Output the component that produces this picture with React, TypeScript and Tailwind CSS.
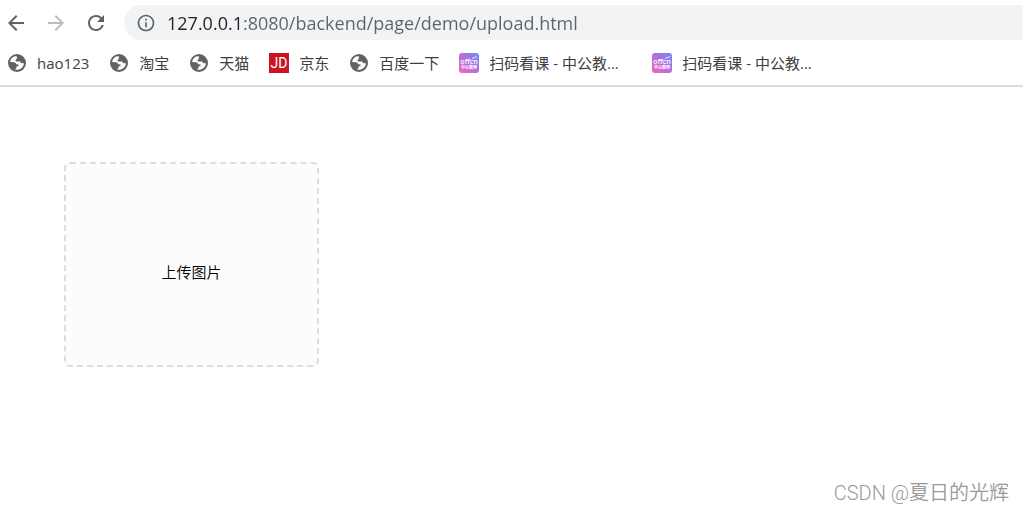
import { useRef, useState } from 'react';
import { MdArrowBack, MdArrowForward, MdInfoOutline, MdRefresh } from 'react-icons/md';

type IconKind = 'globe' | 'jd' | 'offcn';

const bookmarks: { id: number; title: string; icon: IconKind; long?: boolean }[] = [
  { id: 1, title: 'hao123', icon: 'globe' },
  { id: 2, title: '淘宝', icon: 'globe' },
  { id: 3, title: '天猫', icon: 'globe' },
  { id: 4, title: '京东', icon: 'jd' },
  { id: 5, title: '百度一下', icon: 'globe' },
  { id: 6, title: '扫码看课 - 中公教...', icon: 'offcn', long: true },
  { id: 7, title: '扫码看课 - 中公教...', icon: 'offcn', long: true },
];

function GlobeIcon() {
  return (
    <svg viewBox="0 0 20 20" className="size-5 shrink-0" aria-hidden="true">
      <circle cx="10" cy="10" r="9" fill="#5f6368" />
      <path
        d="M9.6 3C6.2 3.2 3.6 5.7 3.1 9L6.8 9.2C8.3 9.3 9.2 10.3 9.2 11.3L11.5 11.5V13.2H9.5V15L8 16.7C12.5 17.6 16.7 14.6 17 10.3L15.2 10.2C14 10.2 13.5 9.5 13.2 8.6H10.2C8.8 8.6 8.2 7.6 8.7 6.7L10 5.4Z"
        fill="#fff"
      />
    </svg>
  );
}

function OffcnIcon() {
  return (
    <svg viewBox="0 0 20 20" className="size-5 shrink-0" aria-hidden="true">
      <defs>
        <linearGradient id="offcn" x1="0" y1="1" x2="1" y2="0">
          <stop offset="0" stopColor="#fb62b4" />
          <stop offset="0.5" stopColor="#b56fe0" />
          <stop offset="1" stopColor="#6b8df5" />
        </linearGradient>
      </defs>
      <rect width="20" height="20" rx="3" fill="url(#offcn)" />
      <text x="10" y="11" textAnchor="middle" fill="#fff" className="font-['Open_Sans'] text-[7px] font-semibold">offcn</text>
      <text x="10" y="16" textAnchor="middle" fill="#fff" className="font-['Noto_Sans_CJK_SC'] text-[4px] font-bold">中公教师</text>
      <path d="M13 5.5L18 3.5" stroke="#fff" strokeWidth="0.8" />
    </svg>
  );
}

function BookmarkIcon({ kind }: { kind: IconKind }) {
  if (kind === 'globe') return <GlobeIcon />;
  if (kind === 'offcn') return <OffcnIcon />;
  return (
    <svg viewBox="0 0 20 20" className="size-5 shrink-0" aria-hidden="true">
      <rect width="20" height="20" fill="#c81623" />
      <text x="10" y="15" textAnchor="middle" fill="#fff" className="font-['Roboto'] text-[14px]">JD</text>
    </svg>
  );
}

export default function App() {
  const [url, setUrl] = useState('127.0.0.1:8080/backend/page/demo/upload.html');
  const fileRef = useRef<HTMLInputElement>(null);

  return (
    <div className="flex min-h-screen flex-col bg-white font-['Open_Sans','Noto_Sans_CJK_SC',sans-serif]">
      {/* Toolbar */}
      <header className="border-b-2 border-[#dadce0]">
        <div className="flex items-center pt-[5px] pl-1">
          <div className="flex items-center gap-4 pr-4 text-[#5f6368]">
            <button type="button" aria-label="Back"><MdArrowBack className="size-6" /></button>
            <button type="button" aria-label="Forward" disabled className="text-[#babcbe]">
              <MdArrowForward className="size-6" />
            </button>
            <button type="button" aria-label="Reload"><MdRefresh className="size-6" /></button>
          </div>
          <div className="flex h-[35px] flex-1 items-center gap-[11px] rounded-l-full bg-[#f1f3f4] pl-3">
            <MdInfoOutline className="size-5 shrink-0 text-[#5f6368]" />
            <input
              type="text"
              aria-label="Address"
              value={url}
              onChange={(e) => setUrl(e.target.value)}
              className="min-w-0 flex-1 bg-[linear-gradient(to_right,#202124_74px,#5f6368_74px)] bg-clip-text text-lg text-transparent caret-black outline-none"
            />
          </div>
        </div>

        {/* Bookmarks bar */}
        <nav className="flex h-[45px] items-center gap-5 pt-px pl-[7px]">
          {bookmarks.map((b) => (
            <a key={b.id} href="#" className="flex items-center gap-2.5 text-[15px] text-[#3c4043]">
              <BookmarkIcon kind={b.icon} />
              <span className={b.long ? 'w-[143px] whitespace-nowrap' : 'whitespace-nowrap'}>{b.title}</span>
            </a>
          ))}
        </nav>
      </header>

      {/* Upload area */}
      <main className="flex-1 px-16 pt-[75px]">
        <input ref={fileRef} type="file" accept="image/*" aria-label="上传图片" className="hidden" />
        <button
          type="button"
          onClick={() => fileRef.current?.click()}
          className="flex h-[205px] w-[255px] items-center justify-center rounded-md border-2 border-dashed border-[#d9dde4] bg-[#fcfcfc] pt-4 text-[15px] font-[350] text-black"
        >
          上传图片
        </button>
      </main>

      <footer className="pr-3.5 pb-1 text-right font-['Roboto','Noto_Sans_CJK_SC',sans-serif] text-xl font-[350] text-[#999]">
        CSDN @夏日的光辉
      </footer>
    </div>
  );
}
